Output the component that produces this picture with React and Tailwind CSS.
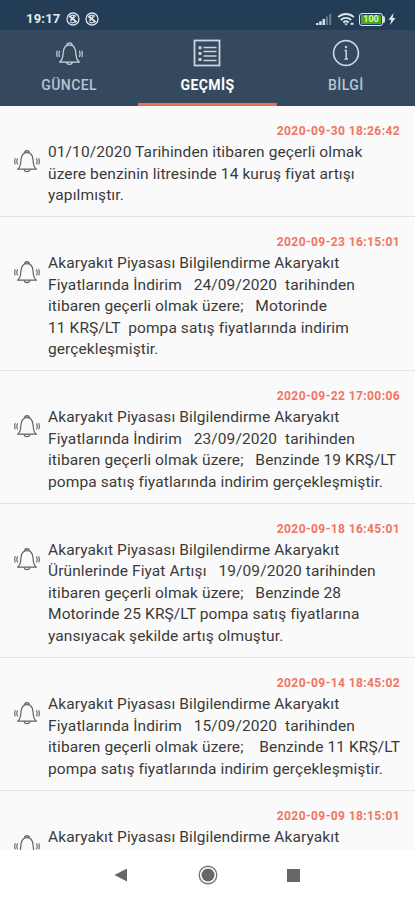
import React from "react";

const FIRST = "Akaryakıt Piyasası Bilgilendirme Akaryakıt";

const ITEMS = [
  {
    date: "2020-09-30 18:26:42",
    height: "h-[111px]",
    lines: [
      "01/10/2020 Tarihinden itibaren geçerli olmak",
      "üzere benzinin litresinde 14 kuruş fiyat artışı",
      "yapılmıştır.",
    ],
  },
  {
    date: "2020-09-23 16:15:01",
    height: "h-[154.2px]",
    lines: [
      FIRST,
      "Fiyatlarında İndirim   24/09/2020  tarihinden",
      "itibaren geçerli olmak üzere;   Motorinde",
      "11 KRŞ/LT  pompa satış fiyatlarında indirim",
      "gerçekleşmiştir.",
    ],
  },
  {
    date: "2020-09-22 17:00:06",
    height: "h-[132.8px]",
    lines: [
      FIRST,
      "Fiyatlarında İndirim   23/09/2020  tarihinden",
      "itibaren geçerli olmak üzere;   Benzinde 19 KRŞ/LT",
      "pompa satış fiyatlarında indirim gerçekleşmiştir.",
    ],
  },
  {
    date: "2020-09-18 16:45:01",
    height: "h-[154.2px]",
    lines: [
      FIRST,
      "Ürünlerinde Fiyat Artışı   19/09/2020 tarihinden",
      "itibaren geçerli olmak üzere;   Benzinde 28",
      "Motorinde 25 KRŞ/LT pompa satış fiyatlarına",
      "yansıyacak şekilde artış olmuştur.",
    ],
  },
  {
    date: "2020-09-14 18:45:02",
    height: "h-[132.8px]",
    lines: [
      FIRST,
      "Fiyatlarında İndirim   15/09/2020  tarihinden",
      "itibaren geçerli olmak üzere;    Benzinde 11 KRŞ/LT",
      "pompa satış fiyatlarında indirim gerçekleşmiştir.",
    ],
  },
  {
    date: "2020-09-09 18:15:01",
    height: "h-[154.2px]",
    lines: [FIRST],
  },
];

function Bell({ className }) {
  return (
    <svg viewBox="0 0 26 24" className={className} fill="none" stroke="currentColor" strokeLinejoin="round" strokeLinecap="round">
      <path d="M10.5 3.400a2.600 2.300 0 0 1 5 0" strokeWidth="1.300" />
      <path d="M3.600 20.200c1.600-1.200 2.600-2.700 2.900-5.200l.6-5C7.600 5.800 9.800 3.600 13 3.600s5.400 2.200 5.900 6.400l.6 5c.3 2.500 1.300 4 2.900 5.200z" strokeWidth="1.200" />
      <path d="M10.300 20.800c.5 2.300 4.900 2.300 5.400 0" strokeWidth="1.300" />
      <path d="M3.400 9.800c-.8 1.700-.8 3.400 0 5.100M1.100 9.600c-.5 1.800-.5 3.600 0 5.400M22.600 9.800c.8 1.700.8 3.400 0 5.100M24.900 9.600c.5 1.800.5 3.600 0 5.400" strokeWidth="1.100" />
    </svg>
  );
}

function ListIcon() {
  return (
    <svg viewBox="0 0 28 28" className="h-7 w-7" fill="none" stroke="currentColor">
      <rect x="1.500" y="1.500" width="25" height="25" strokeWidth="1.800" />
      <path d="M10.500 8.500H23.500M10.500 12.500H23.500M10.500 17H23.500M10.500 21.500H23.500" strokeWidth="1.500" />
      <path d="M5.500 8.800h3M5.500 14.500h3M5.500 20.500h3" strokeWidth="3" />
    </svg>
  );
}

function InfoIcon() {
  return (
    <svg viewBox="0 0 28 28" className="h-7 w-7" fill="none" stroke="currentColor">
      <circle cx="14" cy="14" r="12.400" strokeWidth="1.700" />
      <path d="M12.500 11.500h1.700v8M12.500 20h3.500" strokeWidth="1.500" />
      <circle cx="14" cy="8" r="1.200" fill="currentColor" stroke="none" />
    </svg>
  );
}

function NoticeIcon() {
  return (
    <svg viewBox="0 0 14 14" className="h-3.5 w-3.5" fill="none" stroke="#dce3e9">
      <circle cx="7" cy="7" r="6" strokeWidth="1.300" />
      <path d="M3 5.500C4.500 3 8 2.500 10 4.500M4 9.500c1.500 2 5 1.500 6-.5" strokeWidth="1.200" />
      <path d="M3.500 4l7 6M4.500 8.500l4-4" strokeWidth="1.800" />
    </svg>
  );
}

function StatusBar() {
  return (
    <div className="flex h-[30px] shrink-0 items-start justify-between bg-[#243d56] pl-[26px] pr-[19px] pt-3 text-[#e4e9ee]">
      <div className="flex items-center">
        <span className="w-10 whitespace-pre text-[13px] font-bold leading-[14px] tracking-[0.2px]">19:17</span>
        <NoticeIcon />
        <span className="w-[5px]" />
        <NoticeIcon />
      </div>
      <div className="flex items-center">
        <svg viewBox="0 0 17 14" className="h-3.5 w-[17px]">
          <path d="M1 13v-2h2.500v2zM4.200 13v-3.800h2.500V13zM7.500 13V7h2.500v6z" fill="#d7dfe5" />
          <path d="M10.900 13V4.500h2V13zM14.200 13V2h2v11z" fill="#6d8092" />
        </svg>
        <svg viewBox="0 0 18 14" className="ml-[5px] h-3.5 w-[18px]" fill="none" stroke="#dce4ea" strokeWidth="1.900">
          <path d="M1.200 5C5.500.9 12.500.9 16.800 5M3.800 8c3-2.800 7.400-2.800 10.400 0M6.300 10.500c1.600-1.400 3.800-1.400 5.400 0" />
          <path d="M7 11.500h4l-2 2z" fill="#dce4ea" stroke="none" />
          <path d="M13.500 11.800h3" strokeWidth="2" />
        </svg>
        <div className="ml-1 flex h-[13px] w-6 items-center justify-center rounded-[3px] border border-[#e0e8e5] p-px">
          <div className="flex h-full w-full items-center justify-center rounded-[1px] bg-[#43a91f] text-[9px] font-bold leading-none text-[#d9f5bd]">100</div>
        </div>
        <span className="h-[7px] w-[2px] rounded-r bg-[#d5ded9]" />
        <svg viewBox="0 0 8 12" className="ml-[3px] h-3 w-2" fill="#e4e9ee">
          <path d="M5.500 0L.5 6.700h2.800L2 12l5.500-7H4.600z" />
        </svg>
      </div>
    </div>
  );
}

function Tab({ icon, label, active }) {
  return (
    <div className={"relative flex flex-1 flex-col items-center pt-[9px] " + (active ? "text-white" : "text-[#b9c5cf]")}>
      <div className="flex h-7 items-center justify-center text-[#ccd5dc]">{icon}</div>
      <span className={"mt-[9px] text-[14px] leading-[18px] tracking-[0.4px] " + (active ? "font-bold" : "font-medium")}>{label}</span>
      {active && <span className="absolute inset-x-0 bottom-0 h-[3px] bg-[#ec6b59]" />}
    </div>
  );
}

function Item({ date, lines, height }) {
  return (
    <div className={"flex shrink-0 flex-col border-b border-[#e4e4e4] pt-[17px] " + height}>
      <div className="pr-[15px] text-right text-[12px] font-bold leading-4 tracking-[0.4px] text-[#f07563]">{date}</div>
      <div className="flex pl-3.5 pt-[3px]">
        <Bell className="mt-[7px] h-6 w-[26px] shrink-0 text-[#606060]" />
        <div className="ml-2 text-[15.5px] leading-[21.500px] tracking-[0.1px] text-[#3a3a3a]">
          {lines.map((line) => (
            <div key={line} className="whitespace-pre">{line}</div>
          ))}
        </div>
      </div>
    </div>
  );
}

export default function App() {
  return (
    <div className="flex h-[900px] w-[415px] flex-col overflow-hidden bg-[#fafafa] font-[Roboto,sans-serif]">
      <StatusBar />
      <div className="flex h-[76px] shrink-0 bg-[#34495e]">
        <Tab icon={<Bell className="h-[25px] w-[27px]" />} label="GÜNCEL" />
        <Tab icon={<ListIcon />} label="GEÇMİŞ" active />
        <Tab icon={<InfoIcon />} label="BİLGİ" />
      </div>
      <div className="flex min-h-0 flex-1 flex-col overflow-hidden">
        {ITEMS.map((item) => (
          <Item key={item.date} {...item} />
        ))}
      </div>
      <div className="flex h-[50px] shrink-0 items-center bg-white pl-[114px]">
        <svg viewBox="0 0 14 14" className="h-3.5 w-3.5" fill="#666666">
          <path d="M.5 7L13 .5v13z" />
        </svg>
        <svg viewBox="0 0 20 20" className="ml-[70px] h-5 w-5">
          <circle cx="10" cy="10" r="8.800" fill="none" stroke="#777777" strokeWidth="1.400" />
          <circle cx="10" cy="10" r="6.500" fill="#666666" />
        </svg>
        <span className="ml-[69px] h-[13px] w-[13px] bg-[#666666]" />
      </div>
    </div>
  );
}
